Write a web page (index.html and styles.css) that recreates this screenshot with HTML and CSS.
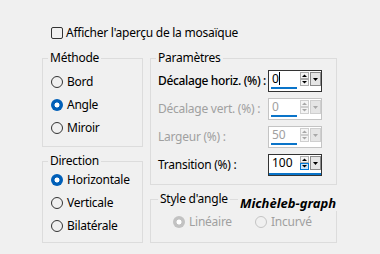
FILE: index.html
```html
<!DOCTYPE html>
<html lang="fr">
<head>
    <meta charset="UTF-8">
    <title>Mosaïque - Angle</title>
    <link rel="stylesheet" href="styles.css">
</head>
<body>
    <div class="dialog">
        <!-- Preview checkbox -->
        <div class="check-row">
            <span class="checkbox"></span>
            <span>Afficher l'aperçu de la mosaïque</span>
        </div>

        <div class="columns">
            <!-- Left column -->
            <div class="col col-left">
                <fieldset class="group method">
                    <legend>Méthode</legend>
                    <div class="radio-row"><span class="radio"></span>Bord</div>
                    <div class="radio-row"><span class="radio checked"></span>Angle</div>
                    <div class="radio-row"><span class="radio"></span>Miroir</div>
                </fieldset>

                <fieldset class="group direction">
                    <legend>Direction</legend>
                    <div class="radio-row"><span class="radio checked"></span>Horizontale</div>
                    <div class="radio-row"><span class="radio"></span>Verticale</div>
                    <div class="radio-row"><span class="radio"></span>Bilatérale</div>
                </fieldset>
            </div>

            <!-- Right column -->
            <div class="col col-right">
                <fieldset class="group params">
                    <legend>Paramètres</legend>

                    <div class="param-row">
                        <span class="param-label strong">Décalage horiz. (%) :</span>
                        <div class="spin focus">
                            <span class="spin-value">0<i class="caret"></i></span>
                            <svg class="spin-btns" width="21" height="14" viewBox="0 0 21 14">
                                <rect class="btn-box" x="0.5" y="0.5" width="8" height="6"/>
                                <path class="arrow" d="M2 5h5L4.5 2.5z"/>
                                <rect class="btn-box" x="0.5" y="7.5" width="8" height="6"/>
                                <path class="arrow" d="M2 9h5l-2.5 2.5z"/>
                                <rect class="drop-box" x="10.5" y="0.5" width="10" height="13"/>
                                <path class="arrow" d="M13 6h5l-2.5 3z"/>
                            </svg>
                        </div>
                    </div>

                    <div class="param-row">
                        <span class="param-label disabled">Décalage vert. (%) :</span>
                        <div class="spin off">
                            <span class="spin-value">0</span>
                            <svg class="spin-btns" width="21" height="14" viewBox="0 0 21 14">
                                <rect class="btn-box" x="0.5" y="0.5" width="8" height="6"/>
                                <path class="arrow" d="M2 5h5L4.5 2.5z"/>
                                <rect class="btn-box" x="0.5" y="7.5" width="8" height="6"/>
                                <path class="arrow" d="M2 9h5l-2.5 2.5z"/>
                                <rect class="drop-box" x="10.5" y="0.5" width="10" height="13"/>
                                <path class="arrow" d="M13 6h5l-2.5 3z"/>
                            </svg>
                        </div>
                    </div>

                    <div class="param-row">
                        <span class="param-label disabled">Largeur (%) :</span>
                        <div class="spin off">
                            <span class="spin-value">50</span>
                            <svg class="spin-btns" width="21" height="14" viewBox="0 0 21 14">
                                <rect class="btn-box" x="0.5" y="0.5" width="8" height="6"/>
                                <path class="arrow" d="M2 5h5L4.5 2.5z"/>
                                <rect class="btn-box" x="0.5" y="7.5" width="8" height="6"/>
                                <path class="arrow" d="M2 9h5l-2.5 2.5z"/>
                                <rect class="drop-box" x="10.5" y="0.5" width="10" height="13"/>
                                <path class="arrow" d="M13 6h5l-2.5 3z"/>
                            </svg>
                        </div>
                    </div>

                    <div class="param-row">
                        <span class="param-label">Transition (%) :</span>
                        <div class="spin full-bar">
                            <span class="spin-value">100</span>
                            <svg class="spin-btns" width="21" height="14" viewBox="0 0 21 14">
                                <rect class="btn-box" x="0.5" y="0.5" width="8" height="6"/>
                                <path class="arrow" d="M2 5h5L4.5 2.5z"/>
                                <rect class="btn-box hover" x="0.5" y="7.5" width="8" height="6"/>
                                <path class="arrow" d="M2 9h5l-2.5 2.5z"/>
                                <rect class="drop-box" x="10.5" y="0.5" width="10" height="13"/>
                                <path class="arrow" d="M13 6h5l-2.5 3z"/>
                            </svg>
                        </div>
                    </div>
                </fieldset>

                <fieldset class="group corner">
                    <legend>Style d'angle</legend>
                    <div class="radio-line">
                        <div class="radio-row first disabled"><span class="radio checked"></span>Linéaire</div>
                        <div class="radio-row disabled"><span class="radio"></span>Incurvé</div>
                    </div>
                </fieldset>
            </div>
        </div>

        <!-- Watermark -->
        <div class="watermark">Michèleb-graph</div>
    </div>
</body>
</html>
```

FILE: styles.css
```css
body {
    margin: 0;
    background-color: #f0f0f0;
    color: #000;
    font-family: "Noto Sans", "Open Sans", sans-serif;
    font-size: 12px;
    line-height: 14px;
    letter-spacing: -0.25px;
    width: 380px;
    height: 254px;
    overflow: hidden;
}
.dialog {
    position: relative;
    padding: 26px 0 0 42px;
}

/* Checkbox row */
.check-row {
    display: flex;
    align-items: center;
    gap: 3px;
    height: 14px;
    margin-left: 9px;
}
.checkbox {
    width: 12px;
    height: 12px;
    box-sizing: border-box;
    border: 1px solid #333;
    border-radius: 2px;
}

/* Columns */
.columns {
    display: flex;
    gap: 7px;
    margin-top: 11px;
}
.col {
    display: flex;
    flex-direction: column;
    gap: 7px;
}
.col-left {
    width: 101px;
}
.col-right {
    width: 187px;
}

/* Group boxes */
.group {
    margin: 0;
    min-width: 0;
    border: 1px solid #dcdcdc;
    padding: 0 0 0 8px;
}
.group legend {
    padding: 0 2px;
    margin-left: -3px;
    line-height: 14px;
}
.method {
    padding-top: 5px;
    padding-bottom: 7px;
}
.direction {
    padding-top: 0;
    padding-bottom: 5px;
}
.params {
    padding: 5px 14px 8px 7px;
}
.params legend {
    margin-left: -2px;
}
.corner {
    padding: 4px 0 9px 22px;
}
.corner legend {
    margin-left: -15px;
}

/* Radios */
.radio-row {
    display: flex;
    align-items: center;
    gap: 4px;
    height: 23px;
}
.radio {
    width: 12px;
    height: 12px;
    box-sizing: border-box;
    border: 1px solid #333;
    border-radius: 50%;
    flex: none;
}
.radio.checked {
    border: none;
    background: radial-gradient(circle, #fff 0 2.2px, #005fb8 2.8px);
}
.radio-line {
    display: flex;
}
.radio-row.first {
    width: 82px;
}
.radio-row.disabled {
    color: #a0a0a0;
}
.radio-row.disabled .radio {
    border-color: #c4c4c4;
}
.radio-row.disabled .radio.checked {
    background: radial-gradient(circle, #fff 0 2.2px, #c2c2c2 2.8px);
}

/* Parameter rows */
.param-row {
    display: flex;
    align-items: center;
    height: 22px;
}
.param-row + .param-row {
    margin-top: 6px;
}
.param-label {
    width: 110px;
    flex: none;
    white-space: nowrap;
}
.param-label.strong {
    font-weight: 500;
    letter-spacing: -0.35px;
}
.param-label.disabled {
    color: #a0a0a0;
}

/* Spin fields */
.spin {
    width: 54px;
    height: 22px;
    box-sizing: border-box;
    border: 1px solid #333;
    background-color: #fff;
    display: flex;
    align-items: flex-start;
    padding-left: 2px;
}
.spin-value {
    width: 25px;
    height: 16px;
    line-height: 16px;
    padding-left: 1px;
    border-bottom: 2px solid #0a74c9;
    letter-spacing: 0;
}
.caret {
    display: inline-block;
    width: 1px;
    height: 13px;
    background-color: #000;
    vertical-align: -2px;
}
.spin-btns {
    display: block;
    margin: 1px 0 0 3px;
}
.btn-box {
    fill: #f4f4f4;
    stroke: #adadad;
}
.btn-box.hover {
    fill: #cce4f7;
    stroke: #0078d7;
}
.drop-box {
    fill: #e5e5e5;
    stroke: #8a8a8a;
}
.arrow {
    fill: #000;
}
.spin.off {
    border-color: #c4c4c4;
    color: #a0a0a0;
}
.spin.off .arrow {
    fill: #a8a8a8;
}
.spin.off .btn-box,
.spin.off .drop-box {
    stroke: #cfcfcf;
}
.spin.full-bar {
    box-shadow: inset 0 -2px 0 #0a74c9;
}
.spin.full-bar .spin-value {
    border-bottom-color: transparent;
}

/* Watermark over the group box */
.watermark {
    position: absolute;
    left: 238px;
    top: 195px;
    padding: 0 2px;
    background-color: #f0f0f0;
    font-weight: 700;
    font-style: italic;
    font-size: 13px;
    line-height: 16px;
    letter-spacing: 0;
}
```
